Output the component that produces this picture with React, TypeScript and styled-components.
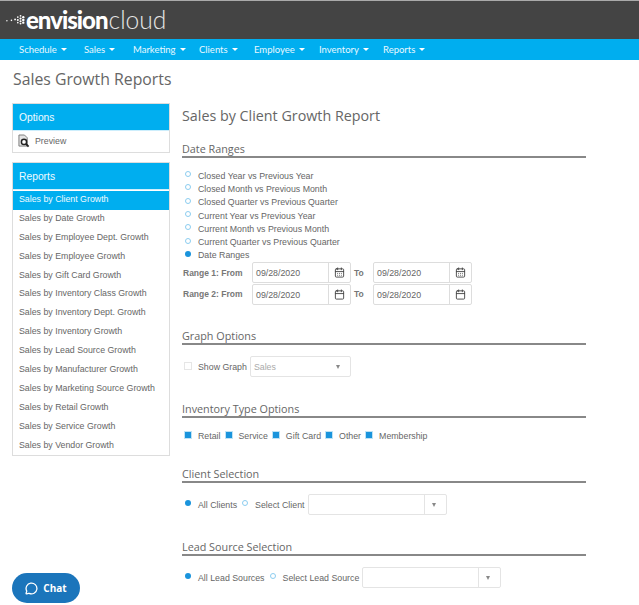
import React from 'react';
import styled, { createGlobalStyle } from 'styled-components';
import { CalendarDays, Calendar, MessageCircle } from 'lucide-react';

const reports = [
    'Sales by Client Growth',
    'Sales by Date Growth',
    'Sales by Employee Dept. Growth',
    'Sales by Employee Growth',
    'Sales by Gift Card Growth',
    'Sales by Inventory Class Growth',
    'Sales by Inventory Dept. Growth',
    'Sales by Inventory Growth',
    'Sales by Lead Source Growth',
    'Sales by Manufacturer Growth',
    'Sales by Marketing Source Growth',
    'Sales by Retail Growth',
    'Sales by Service Growth',
    'Sales by Vendor Growth',
];

const menu = [
    { label: 'Schedule', width: 60 },
    { label: 'Sales', width: 44 },
    { label: 'Marketing', width: 61 },
    { label: 'Clients', width: 50 },
    { label: 'Employee', width: 60 },
    { label: 'Inventory', width: 59 },
    { label: 'Reports', width: 60 },
];

const dateRanges = [
    'Closed Year vs Previous Year',
    'Closed Month vs Previous Month',
    'Closed Quarter vs Previous Quarter',
    'Current Year vs Previous Year',
    'Current Month vs Previous Month',
    'Current Quarter vs Previous Quarter',
];

const inventoryTypes = ['Retail', 'Service', 'Gift Card', 'Other', 'Membership'];

const logoDots = [
    [1, 9, 0.8], [6, 8.5, 0.9], [10, 7.5, 1], [13, 5, 0.9], [13, 8, 1.1], [13, 11, 0.9],
    [16, 3.5, 1], [16, 6.5, 1.2], [16, 9.5, 1.2], [16, 12, 1],
    [19, 5, 1.3], [19, 8, 1.4], [19, 11, 1.3],
];

const PreviewIcon = () => (
    <svg width="12" height="14" viewBox="0 0 13 14">
        <path d="M1 .5h6l3 3v9H1z" fill="#e4e4e4" stroke="#777" strokeWidth="1" />
        <circle cx="6.5" cy="8" r="2.8" fill="#fff" stroke="#222" strokeWidth="1.6" />
        <path d="M8.5 10l3 3" stroke="#222" strokeWidth="2" />
    </svg>
);

const DateInput: React.FC<{ alt?: boolean }> = ({ alt }) => (
    <DateBox>
        <DateValue>09/28/2020</DateValue>
        <DateButton>{alt ? <Calendar size={11} /> : <CalendarDays size={11} />}</DateButton>
    </DateBox>
);

const App: React.FC = () => {
    return (
        <>
            <GlobalStyle />
            <TopBar>
                <Logo>
                    <LogoDots>
                        <svg width="22" height="14" viewBox="0 0 22 14">
                            {logoDots.map(([x, y, r], i) => (
                                <circle key={i} cx={x} cy={y} r={r} fill="#fff" />
                            ))}
                        </svg>
                    </LogoDots>
                    <LogoBold>envision</LogoBold>
                    <LogoLight>cloud</LogoLight>
                </Logo>
            </TopBar>
            <NavBar>
                {menu.map(item => (
                    <NavItem key={item.label} $width={item.width}>
                        {item.label}
                        <Caret />
                    </NavItem>
                ))}
            </NavBar>
            <PageTitle>Sales Growth Reports</PageTitle>
            <Columns>
                <Sidebar>
                    <Panel>
                        <PanelHeader>Options</PanelHeader>
                        <PreviewRow>
                            <PreviewIcon />
                            <span>Preview</span>
                        </PreviewRow>
                    </Panel>
                    <Panel>
                        <PanelHeader>Reports</PanelHeader>
                        <ReportList>
                            {reports.map((report, i) => (
                                <ReportItem key={report} $active={i === 0}>{report}</ReportItem>
                            ))}
                        </ReportList>
                    </Panel>
                </Sidebar>
                <Main>
                    <ReportTitle>Sales by Client Growth Report</ReportTitle>

                    <SectionTitle $top={11}>Date Ranges</SectionTitle>
                    <RadioStack>
                        {dateRanges.map(label => (
                            <RadioLine key={label}>
                                <Radio />
                                <OptionLabel>{label}</OptionLabel>
                            </RadioLine>
                        ))}
                        <RadioLine>
                            <Radio $checked />
                            <OptionLabel>Date Ranges</OptionLabel>
                        </RadioLine>
                    </RadioStack>
                    <RangeRow>
                        <RangeLabel>Range 1: From</RangeLabel>
                        <DateInput />
                        <ToLabel>To</ToLabel>
                        <DateInput />
                    </RangeRow>
                    <RangeRow>
                        <RangeLabel>Range 2: From</RangeLabel>
                        <DateInput alt />
                        <ToLabel>To</ToLabel>
                        <DateInput alt />
                    </RangeRow>

                    <SectionTitle $top={22}>Graph Options</SectionTitle>
                    <ControlRow $top={11}>
                        <Check />
                        <OptionLabel>Show Graph</OptionLabel>
                        <Select $width={101} $left={3}>
                            <SelectValue>Sales</SelectValue>
                            <SelectArrow $plain />
                        </Select>
                    </ControlRow>

                    <SectionTitle $top={23}>Inventory Type Options</SectionTitle>
                    <CheckRow>
                        {inventoryTypes.map(type => (
                            <CheckItem key={type}>
                                <Check $checked />
                                <OptionLabel>{type}</OptionLabel>
                            </CheckItem>
                        ))}
                    </CheckRow>

                    <SectionTitle $top={22}>Client Selection</SectionTitle>
                    <ControlRow $top={11}>
                        <Radio $checked />
                        <OptionLabel>All Clients</OptionLabel>
                        <Radio $left={2} />
                        <OptionLabel>Select Client</OptionLabel>
                        <Select $width={139} $left={3}>
                            <SelectValue />
                            <SelectArrow />
                        </Select>
                    </ControlRow>

                    <SectionTitle $top={23}>Lead Source Selection</SectionTitle>
                    <ControlRow $top={11}>
                        <Radio $checked />
                        <OptionLabel>All Lead Sources</OptionLabel>
                        <Radio $left={2} />
                        <OptionLabel>Select Lead Source</OptionLabel>
                        <Select $width={139} $left={3}>
                            <SelectValue />
                            <SelectArrow />
                        </Select>
                    </ControlRow>
                </Main>
            </Columns>
            <ChatButton>
                <MessageCircle size={13} strokeWidth={2.4} />
                Chat
            </ChatButton>
        </>
    );
};

const GlobalStyle = createGlobalStyle`
    html, body {
        margin: 0;
        padding: 0;
        background: #fff;
        overflow: hidden;
    }
    body {
        font-family: "Liberation Sans", Arial, sans-serif;
        font-size: 10px;
        color: #555;
    }
`;

const TopBar = styled.div`
    height: 39px;
    background: #444;
    border-top: 1px solid #aaa;
    display: flex;
    align-items: center;
    box-sizing: border-box;
    padding-left: 6px;
`;

const Logo = styled.div`
    display: flex;
    align-items: center;
    color: #fff;
    height: 30px;
    margin-top: -2px;
`;

const LogoDots = styled.span`
    display: flex;
    width: 20px;
    flex: none;
`;

const LogoBold = styled.span`
    font-family: Lato, sans-serif;
    font-weight: 900;
    font-size: 24px;
    letter-spacing: -1px;
`;

const LogoLight = styled.span`
    font-family: Lato, sans-serif;
    font-weight: 300;
    font-size: 24.6px;
    margin-left: 1px;
    color: #e6e6e6;
`;

const NavBar = styled.nav`
    height: 21px;
    background: #00aeef;
    display: flex;
    align-items: center;
    padding-left: 19px;
    box-sizing: border-box;
    gap: 5px;
`;

const NavItem = styled.div<{ $width: number }>`
    width: ${p => p.$width}px;
    font-family: Lato, sans-serif;
    font-size: 9.5px;
    color: #e8f8ff;
    white-space: nowrap;
    display: flex;
    align-items: center;
    gap: 4px;
`;

const Caret = styled.span`
    width: 0;
    height: 0;
    border-left: 3px solid transparent;
    border-right: 3px solid transparent;
    border-top: 3px solid #fff;
`;

const PageTitle = styled.h1`
    margin: 8px 0 0 13px;
    font-family: "Open Sans", sans-serif;
    font-weight: 400;
    font-size: 15.8px;
    line-height: 22px;
    color: #666;
`;

const Columns = styled.div`
    display: flex;
    padding: 13px 0 0 12px;
    gap: 12px;
`;

const Sidebar = styled.aside`
    width: 158px;
    flex: none;
    display: flex;
    flex-direction: column;
    gap: 9px;
`;

const Panel = styled.section`
    border: 1px solid #ddd;
    background: #fff;
`;

const PanelHeader = styled.div`
    height: 26px;
    background: #00aeef;
    color: #f0fbff;
    font-size: 10.3px;
    line-height: 27px;
    padding-left: 6px;
    border-bottom: 1px solid #cdeefc;
`;

const PreviewRow = styled.div`
    height: 21px;
    box-sizing: border-box;
    padding: 0 0 1px 5px;
    display: flex;
    align-items: center;
    gap: 5px;
    font-size: 8.8px;
    color: #666;
`;

const ReportList = styled.div`
    padding: 1px 0 0;
`;

const ReportItem = styled.div<{ $active?: boolean }>`
    height: 18.9px;
    line-height: 17px;
    padding-left: 6px;
    font-size: 8.8px;
    white-space: nowrap;
    background: ${p => (p.$active ? '#00aeef' : 'transparent')};
    color: ${p => (p.$active ? '#f0fbff' : '#666')};
`;

const Main = styled.main`
    width: 404px;
    flex: none;
`;

const ReportTitle = styled.h2`
    margin: 0;
    font-family: "Open Sans", sans-serif;
    font-weight: 400;
    font-size: 14.3px;
    line-height: 26px;
    color: #666;
`;

const SectionTitle = styled.h3<{ $top: number }>`
    margin: ${p => p.$top}px 0 0;
    font-family: "Open Sans", sans-serif;
    font-weight: 400;
    font-size: 10.8px;
    line-height: 17px;
    height: 16px;
    color: #666;
    border-bottom: 2px solid #888;
`;

const RadioStack = styled.div`
    margin-top: 11px;
    display: flex;
    flex-direction: column;
`;

const RadioLine = styled.label`
    height: 13.3px;
    display: flex;
    align-items: center;
`;

const Radio = styled.span<{ $checked?: boolean; $left?: number }>`
    flex: none;
    width: 6px;
    height: 6px;
    box-sizing: border-box;
    border-radius: 50%;
    margin: -3px 7px 0 ${p => (p.$left ?? 0) + 3}px;
    border: ${p => (p.$checked ? 'none' : '1px solid #8ccdf0')};
    background: ${p => (p.$checked ? '#1a94dc' : '#fff')};
`;

const OptionLabel = styled.span`
    font-size: 8.8px;
    color: #666;
    white-space: nowrap;
`;

const RangeRow = styled.div`
    height: 21.5px;
    display: flex;
    align-items: center;
`;

const RangeLabel = styled.span`
    width: 69px;
    margin-left: 1px;
    flex: none;
    font-size: 8.5px;
    font-weight: 700;
    color: #777;
    white-space: nowrap;
`;

const DateBox = styled.div`
    width: 99px;
    height: 21px;
    box-sizing: border-box;
    display: flex;
    border: 1px solid #ddd;
    border-radius: 2px;
    background: #fff;
`;

const DateValue = styled.span`
    flex: 1;
    padding-left: 3px;
    font-size: 8.8px;
    line-height: 20px;
    color: #666;
`;

const DateButton = styled.span`
    width: 21px;
    border-left: 1px solid #ddd;
    display: flex;
    align-items: center;
    justify-content: center;
    color: #444;
`;

const ToLabel = styled.span`
    width: 22px;
    flex: none;
    padding-left: 3px;
    box-sizing: border-box;
    font-size: 8.5px;
    font-weight: 700;
    color: #777;
`;

const ControlRow = styled.div<{ $top: number }>`
    margin-top: ${p => p.$top}px;
    height: 21px;
    display: flex;
    align-items: center;
`;

const CheckRow = styled.div`
    margin-top: 11px;
    height: 14px;
    display: flex;
    align-items: center;
    gap: 2px;
`;

const CheckItem = styled.span`
    display: flex;
    align-items: center;
`;

const Check = styled.span<{ $checked?: boolean }>`
    flex: none;
    width: 8px;
    height: 8px;
    box-sizing: border-box;
    margin: -2px 6px 0 2px;
    border: 1px solid ${p => (p.$checked ? '#bfe3f5' : '#e6e6e6')};
    background: ${p => (p.$checked ? '#1a94dc' : '#fff')};
`;

const Select = styled.div<{ $width: number; $left: number }>`
    width: ${p => p.$width}px;
    margin-left: ${p => p.$left}px;
    height: 21px;
    box-sizing: border-box;
    display: flex;
    border: 1px solid #e4e4e4;
    border-radius: 2px;
    background: #fff;
`;

const SelectValue = styled.span`
    flex: 1;
    padding-left: 3px;
    font-size: 8.8px;
    line-height: 20px;
    color: #aaa;
`;

const SelectArrow = styled.span<{ $plain?: boolean }>`
    width: 21px;
    flex: none;
    position: relative;
    border-left: 1px solid ${p => (p.$plain ? 'transparent' : '#e4e4e4')};
    &::after {
        content: '';
        position: absolute;
        left: 7px;
        top: 8px;
        border-left: 2.5px solid transparent;
        border-right: 2.5px solid transparent;
        border-top: 4px solid #888;
    }
`;

const ChatButton = styled.button`
    position: fixed;
    left: 12px;
    top: 573px;
    width: 68px;
    height: 30px;
    border: none;
    border-radius: 15px;
    background: #1b75bb;
    color: #fff;
    font-family: "Open Sans", sans-serif;
    font-size: 10px;
    font-weight: 700;
    display: flex;
    align-items: center;
    justify-content: center;
    gap: 5px;
    padding: 0;
`;

export default App;
